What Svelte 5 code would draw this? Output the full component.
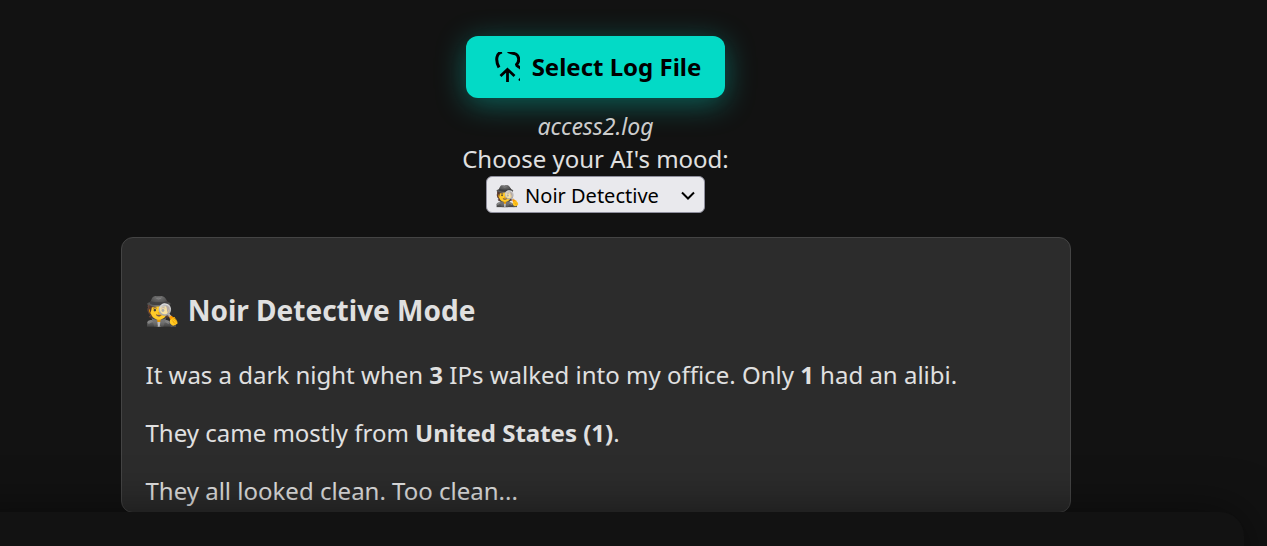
<script lang="ts">
  type Mood = { id: string; label: string };

  const moods: Mood[] = [
    { id: "noir", label: "🕵️ Noir Detective" },
  ];

  let mood = $state("noir");
  let fileName = $state("access2.log");
  let fileInput: HTMLInputElement;

  const report = { ips: 3, clean: 1, country: "United States", hits: 1 };

  function onFile() {
    const file = fileInput.files?.[0];
    if (file) fileName = file.name;
  }
</script>

<div class="page">
  <main>
    <button class="upload" type="button" onclick={() => fileInput.click()}>
      <svg width="25" height="30" viewBox="0 0 25 30" fill="none" stroke="#000" stroke-width="3" aria-hidden="true">
        <path d="M7 0C1.5 1 0 8 4 15.5" />
        <path d="M13 -1C16 2.5 20 0 22.5 3.5C24.5 7 24 10 21.5 12.5C21.5 14.5 24 14.5 26 16.5" />
        <path d="M5.5 24L12.5 17.5L19.5 24M12.5 18V30" stroke-width="2.8" />
        <path d="M24 28.5L26 26" stroke-width="2" />
      </svg>
      Select Log File
    </button>
    <input type="file" hidden bind:this={fileInput} onchange={onFile} />
    <em class="file-name">{fileName}</em>

    <label for="mood">Choose your AI's mood:</label>
    <div class="select">
      <select id="mood" bind:value={mood}>
        {#each moods as m}
          <option value={m.id}>{m.label}</option>
        {/each}
      </select>
      <svg width="14" height="10" viewBox="0 0 14 10" fill="none" stroke="#000" stroke-width="2" aria-hidden="true">
        <path d="M1 1.5L7 7.5L13 1.5" />
      </svg>
    </div>

    <section class="card">
      <h3>🕵️ Noir Detective Mode</h3>
      <p>It was a dark night when <strong>{report.ips}</strong> IPs walked into my office. Only <strong>{report.clean}</strong> had an alibi.</p>
      <p>They came mostly from <strong>{report.country} ({report.hits})</strong>.</p>
      <p>They all looked clean. Too clean...</p>
    </section>
  </main>

  <footer></footer>
</div>

<style>
  :global(body) {
    background: #121212;
    overflow: hidden;
  }

  .page {
    height: 100vh;
    overflow: hidden;
    display: flex;
    flex-direction: column;
    color: #e0e0e0;
    font-family: "Noto Sans", "Noto Color Emoji", sans-serif;
    font-size: 24px;
    line-height: 34px;
  }

  main {
    display: flex;
    flex-direction: column;
    align-items: center;
    margin-right: 76px;
    padding-top: 36px;
  }

  .upload {
    display: flex;
    align-items: center;
    gap: 12px;
    padding: 14px 24px 14px 29px;
    border: none;
    border-radius: 12px;
    background: #03dac6;
    color: #000;
    font: inherit;
    font-weight: 700;
    cursor: pointer;
    box-shadow: 0 6px 30px rgba(3, 218, 198, 0.4);
  }

  .file-name {
    margin-top: 12px;
    font-size: 23px;
    line-height: 32px;
    color: #ccc;
  }

  .select {
    position: relative;
    display: flex;
  }

  select {
    appearance: none;
    height: 37px;
    padding: 2px 45px 0 8px;
    border: 1px solid #8f8f9d;
    border-radius: 6px;
    background: #e9e9ed;
    color: #000;
    font-family: inherit;
    font-size: 20px;
  }

  .select svg {
    position: absolute;
    right: 10px;
    top: 15px;
    pointer-events: none;
  }

  .card {
    box-sizing: border-box;
    width: 100%;
    max-width: 950px;
    margin-top: 24px;
    padding: 24px 24px 4px;
    border: 1px solid #444;
    border-radius: 12px;
    background: #2c2c2c;
  }

  h3 {
    margin: 28px 0;
    font-size: 28px;
    line-height: 40px;
  }

  p {
    margin: 24px 0 0;
  }

  footer {
    position: relative;
    flex: 1;
    margin: -1px 23px -48px -48px;
    border-radius: 0 24px 0 0;
    background: #121212;
    box-shadow: 0 0 48px rgba(0, 0, 0, 0.5);
  }
</style>
